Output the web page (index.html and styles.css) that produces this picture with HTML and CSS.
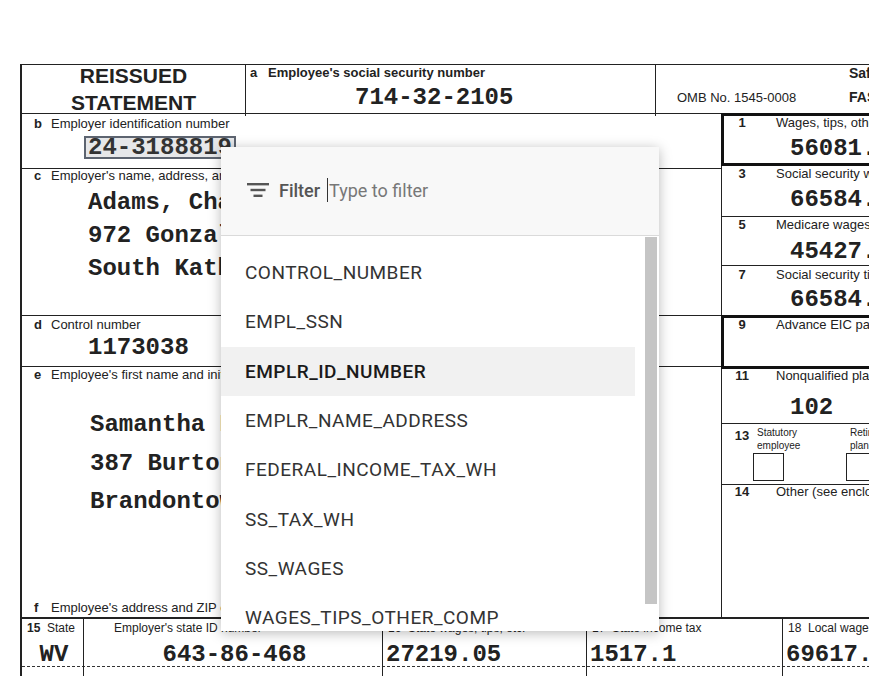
FILE: index.html
```html
<!DOCTYPE html>
<html lang="en">
<head>
    <meta charset="UTF-8">
    <meta name="viewport" content="width=device-width, initial-scale=1.0">
    <title>W-2 Field Mapping</title>
    <link rel="stylesheet" href="styles.css">
</head>
<body>
    <div class="page">
        <div class="w2">
            <!-- Top row -->
            <div class="top-row">
                <div class="reissued">
                    <span>REISSUED</span>
                    <span>STATEMENT</span>
                </div>
                <div class="ssn">
                    <div class="lbl strong"><b>a</b>Employee's social security number</div>
                    <div class="val ssn-val">714-32-2105</div>
                </div>
                <div class="omb">
                    <div class="omb-no">OMB No. 1545-0008</div>
                    <div class="safe">Safe, accurate,<br>FAST! Use</div>
                </div>
            </div>

            <!-- Main boxes -->
            <div class="main">
                <div class="left-col">
                    <div class="box box-b">
                        <div class="lbl"><b>b</b>Employer identification number</div>
                        <div class="val indent"><span class="sel">24-3188819</span></div>
                    </div>
                    <div class="box box-c">
                        <div class="lbl"><b>c</b>Employer's name, address, and ZIP code</div>
                        <div class="lines indent">
                            <div>Adams, Chavez and Hill</div>
                            <div>972 Gonzalez Ports</div>
                            <div>South Katherine</div>
                        </div>
                    </div>
                    <div class="box box-d">
                        <div class="lbl"><b>d</b>Control number</div>
                        <div class="val indent">1173038</div>
                    </div>
                    <div class="box box-e">
                        <div class="lbl"><b>e</b>Employee's first name and initial</div>
                        <div class="lines tall">
                            <div>Samantha Brown</div>
                            <div>387 Burton Mills</div>
                            <div>Brandontown</div>
                        </div>
                        <div class="lbl f-lbl"><b>f</b>Employee's address and ZIP code</div>
                    </div>
                </div>

                <div class="right-col">
                    <div class="rbox thick box-1">
                        <div class="rlbl"><b class="num">1</b><span>Wages, tips, other compensation</span></div>
                        <div class="val rval">56081.22</div>
                    </div>
                    <div class="rbox box-3">
                        <div class="rlbl"><b class="num">3</b><span>Social security wages</span></div>
                        <div class="val rval">66584.10</div>
                    </div>
                    <div class="rbox box-5">
                        <div class="rlbl"><b class="num">5</b><span>Medicare wages and tips</span></div>
                        <div class="val rval">45427.30</div>
                    </div>
                    <div class="rbox box-7">
                        <div class="rlbl"><b class="num">7</b><span>Social security tips</span></div>
                        <div class="val rval">66584.10</div>
                    </div>
                    <div class="rbox thick box-9">
                        <div class="rlbl"><b class="num">9</b><span>Advance EIC payment</span></div>
                    </div>
                    <div class="rbox box-11">
                        <div class="rlbl"><b class="num">11</b><span>Nonqualified plans</span></div>
                        <div class="val rval">102</div>
                    </div>
                    <div class="rbox box-13">
                        <b class="num num-13">13</b>
                        <div class="check-group">
                            <div class="small">Statutory<br>employee</div>
                            <div class="check"></div>
                        </div>
                        <div class="check-group">
                            <div class="small">Retirement<br>plan</div>
                            <div class="check"></div>
                        </div>
                    </div>
                    <div class="rbox box-14">
                        <div class="rlbl"><b class="num">14</b><span>Other (see enclosed)</span></div>
                    </div>
                </div>
            </div>

            <!-- State / local row -->
            <div class="state-row">
                <div class="scell">
                    <div class="slbl"><b>15</b>&nbsp; State</div>
                    <div class="val center">WV</div>
                </div>
                <div class="scell">
                    <div class="slbl id-lbl">Employer's state ID number</div>
                    <div class="val center">643-86-468</div>
                </div>
                <div class="scell">
                    <div class="slbl">16&nbsp; State wages, tips, etc.</div>
                    <div class="val">27219.05</div>
                </div>
                <div class="scell">
                    <div class="slbl">17&nbsp; State income tax</div>
                    <div class="val">1517.1</div>
                </div>
                <div class="scell">
                    <div class="slbl">18&nbsp; Local wages, tips, etc.</div>
                    <div class="val">69617.00</div>
                </div>
            </div>
            <div class="state-row blank">
                <div class="scell"></div>
                <div class="scell"></div>
                <div class="scell"></div>
                <div class="scell"></div>
                <div class="scell"></div>
            </div>
        </div>

        <!-- Field picker dropdown -->
        <div class="picker">
            <div class="picker-head">
                <svg class="filter-icon" width="22" height="14" viewBox="0 0 22 14">
                    <rect x="0" y="0" width="22" height="2.4" fill="#555"/>
                    <rect x="3.5" y="5.8" width="15" height="2.4" fill="#555"/>
                    <rect x="6.5" y="11.6" width="9" height="2.4" fill="#555"/>
                </svg>
                <span class="filter-word">Filter</span>
                <span class="caret"></span>
                <span class="placeholder">Type to filter</span>
            </div>
            <div class="picker-list">
                <div class="opt">CONTROL_NUMBER</div>
                <div class="opt">EMPL_SSN</div>
                <div class="opt active">EMPLR_ID_NUMBER</div>
                <div class="opt">EMPLR_NAME_ADDRESS</div>
                <div class="opt">FEDERAL_INCOME_TAX_WH</div>
                <div class="opt">SS_TAX_WH</div>
                <div class="opt">SS_WAGES</div>
                <div class="opt">WAGES_TIPS_OTHER_COMP</div>
                <div class="thumb"></div>
            </div>
        </div>
    </div>
</body>
</html>
```

FILE: styles.css
```css
/* General Styles */
* {
    margin: 0;
    padding: 0;
    box-sizing: border-box;
}

body {
    font-family: "Liberation Sans", Arial, sans-serif;
    background-color: #fff;
    color: #222;
    overflow: hidden;
}

.page {
    position: relative;
    width: 869px;
    height: 676px;
    overflow: hidden;
    padding: 64px 0 0 20px;
}

/* W-2 form */
.w2 {
    width: 980px;
    border-left: 2px solid #222;
    border-top: 1px solid #222;
}

.lbl {
    font-size: 13px;
    line-height: 14px;
    white-space: nowrap;
}

.lbl b {
    display: inline-block;
    width: 17px;
}

.lbl.strong {
    font-weight: bold;
}

.val {
    font-family: "Liberation Mono", "Courier New", monospace;
    font-weight: bold;
    font-size: 24px;
    line-height: 26px;
    white-space: nowrap;
    color: #222;
}

/* Top row */
.top-row {
    display: grid;
    grid-template-columns: 224px 410px 1fr;
    height: 49px;
    border-bottom: 1px solid #222;
}

.reissued {
    display: flex;
    flex-direction: column;
    align-items: center;
    border-right: 1px solid #222;
    font-weight: bold;
    font-size: 21px;
    line-height: 27px;
}

.reissued span:first-child {
    margin-top: -3px;
}

.ssn {
    border-right: 1px solid #222;
    padding: 1px 0 0 4px;
}

.ssn .lbl b {
    width: 18px;
}

.ssn-val {
    margin: 5px 0 0 105px;
}

.omb {
    display: flex;
}

.omb-no {
    width: 193px;
    padding: 26px 0 0 21px;
    font-size: 13px;
    line-height: 14px;
}

.safe {
    margin-top: -4px;
    font-weight: bold;
    font-size: 14px;
    line-height: 24px;
    white-space: nowrap;
}

/* Main area */
.main {
    display: grid;
    grid-template-columns: 700px 1fr;
}

.left-col {
    border-right: 1px solid #222;
}

.box {
    border-bottom: 1px solid #222;
    padding-left: 12px;
}

.indent {
    margin-left: 54px;
}

.box-b {
    height: 55px;
    padding-top: 3px;
}

.box-b .val {
    margin-top: 4px;
}

.sel {
    display: inline-block;
    margin-left: -4px;
    padding: 0 2px;
    line-height: 19px;
    border: 2px solid #5d6470;
    background-color: #e6e7e9;
    color: #333;
}

.box-c {
    height: 147px;
}

.box-c .lbl {
    line-height: 13px;
}

.lines {
    font-family: "Liberation Mono", "Courier New", monospace;
    font-weight: bold;
    font-size: 24px;
    line-height: 33px;
    white-space: nowrap;
}

.box-c .lines {
    margin-top: 4px;
}

.box-d {
    height: 51px;
    padding-top: 2px;
}

.box-d .val {
    margin-top: 3px;
}

.box-e {
    display: flex;
    flex-direction: column;
    height: 251px;
    padding-top: 1px;
}

.lines.tall {
    margin: 24px 0 0 56px;
    line-height: 38.5px;
}

.f-lbl {
    margin-top: auto;
    padding-bottom: 2px;
}

/* Right column boxes */
.rbox {
    border-bottom: 1px solid #222;
    padding-left: 8px;
}

.rbox.thick {
    border: 3px solid #111;
    border-right: none;
    margin: -1px 0 0 -1px;
    padding-left: 6px;
}

.rlbl {
    display: flex;
    font-size: 13px;
    line-height: 14px;
    white-space: nowrap;
}

.num {
    width: 24px;
    text-align: center;
    font-size: 13px;
}

.rlbl span {
    margin-left: 22px;
}

.rval {
    margin-left: 60px;
}

.box-1 {
    height: 53px;
}

.box-1 .rval {
    margin-top: 6px;
}

.box-3 {
    height: 51px;
    padding-top: 1px;
}

.box-3 .rval {
    margin-top: 6px;
}

.box-5 {
    height: 49px;
    padding-top: 1px;
}

.box-5 .rval {
    margin-top: 7px;
}

.box-7 {
    height: 50px;
    padding-top: 2px;
}

.box-7 .rval {
    margin-top: 5px;
}

.box-9 {
    height: 54px;
}

.box-11 {
    height: 55px;
}

.box-11 .rval {
    margin-top: 12px;
}

.box-13 {
    display: flex;
    height: 61px;
    padding-top: 2px;
}

.num-13 {
    padding-top: 3px;
    line-height: 14px;
}

.check-group {
    width: 93px;
    margin-left: -1px;
}

.check-group + .check-group {
    margin-left: 0;
}

.small {
    font-size: 10px;
    line-height: 13px;
    padding-left: 4px;
    white-space: nowrap;
}

.check {
    width: 31px;
    height: 28px;
    margin-top: 1px;
    border: 1px solid #222;
}

.box-14 {
    height: 133px;
}

/* State row */
.state-row {
    display: grid;
    grid-template-columns: 62px 299px 204px 196px 1fr;
    height: 49px;
    border-top: 1px solid #222;
    border-bottom: 1px dashed #333;
}

.state-row.blank {
    border: none;
}

.scell {
    border-right: 1px solid #222;
    padding: 2px 0 0 3px;
}

.slbl {
    font-size: 12px;
    line-height: 14px;
    white-space: nowrap;
    padding-left: 2px;
}

.id-lbl {
    padding-left: 27px;
}

.scell .val {
    margin-top: 7px;
}

.val.center {
    text-align: center;
}

/* Field picker */
.picker {
    position: absolute;
    left: 221px;
    top: 147px;
    width: 438px;
    height: 484px;
    display: flex;
    flex-direction: column;
    background-color: #fff;
    box-shadow: 0 2px 12px rgba(0, 0, 0, 0.28);
    font-family: Roboto, "Noto Sans", sans-serif;
    overflow: hidden;
}

.picker-head {
    flex: none;
    display: flex;
    align-items: center;
    height: 89px;
    padding: 0 0 2px 26px;
    background-color: #f8f8f8;
    border-bottom: 1px solid #dadada;
    font-size: 18px;
}

.filter-word {
    margin-left: 10px;
    font-weight: 500;
    color: #555;
}

.caret {
    display: inline-block;
    width: 1px;
    height: 24px;
    margin-left: 7px;
    background-color: #333;
}

.placeholder {
    margin-left: 1px;
    color: #777;
}

.picker-list {
    position: relative;
    flex: 1;
    padding-top: 12px;
}

.opt {
    display: flex;
    align-items: center;
    width: 414px;
    height: 49.3px;
    padding-left: 24px;
    font-size: 19px;
    letter-spacing: 0.5px;
    color: #333;
    white-space: nowrap;
}

.opt.active {
    background-color: #f1f1f1;
    color: #1a1a1a;
    font-weight: 500;
}

.thumb {
    position: absolute;
    left: 424px;
    top: 1px;
    width: 12px;
    height: 367px;
    background-color: #c5c5c5;
}
```
